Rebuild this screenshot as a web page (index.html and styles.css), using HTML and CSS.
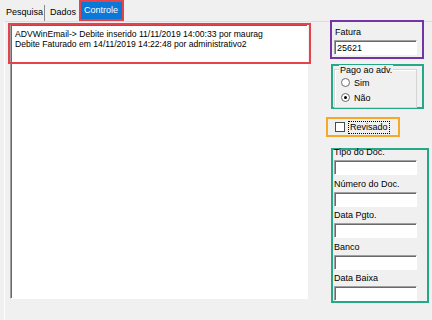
FILE: index.html
```html
<!DOCTYPE html>
<html lang="pt">
<head>
    <meta charset="UTF-8">
    <title>Controle</title>
    <link rel="stylesheet" href="styles.css">
</head>
<body>
    <div class="tabs">
        <div class="tab sep">Pesquisa</div>
        <div class="tab">Dados</div>
        <div class="tab active">Controle</div>
    </div>

    <div class="panel">
        <div class="memo">
            <div class="mark-red"></div>
            <div class="memo-text">
                ADVWinEmail-&gt; Debite inserido 11/11/2019 14:00:33 por maurag<br>
                Debite Faturado em 14/11/2019 14:22:48 por administrativo2
            </div>
        </div>

        <div class="side">
            <div class="box box-purple">
                <div class="label">Fatura</div>
                <div class="edit">25621</div>
            </div>

            <div class="box box-green pago">
                <div class="group">
                    <span class="group-title">Pago ao adv.</span>
                    <div class="radio-row"><span class="radio"></span>Sim</div>
                    <div class="radio-row"><span class="radio checked"></span>Não</div>
                </div>
            </div>

            <div class="box box-orange">
                <span class="check"></span>
                <span class="focus">Revisado</span>
            </div>

            <div class="box box-green docs">
                <div class="field">
                    <div class="label">Tipo do Doc.</div>
                    <div class="edit"></div>
                </div>
                <div class="field">
                    <div class="label">Número do Doc.</div>
                    <div class="edit"></div>
                </div>
                <div class="field">
                    <div class="label">Data Pgto.</div>
                    <div class="edit"></div>
                </div>
                <div class="field">
                    <div class="label">Banco</div>
                    <div class="edit"></div>
                </div>
                <div class="field">
                    <div class="label">Data Baixa</div>
                    <div class="edit"></div>
                </div>
            </div>
        </div>
    </div>
</body>
</html>
```

FILE: styles.css
```css
body {
    margin: 0;
    height: 320px;
    overflow: hidden;
    background: #f0f0f0;
    font-family: "Liberation Sans", Arial, sans-serif;
    font-size: 9px;
    color: #000;
}
.tabs {
    display: flex;
    align-items: flex-start;
    height: 21px;
    padding-left: 3px;
}
.tab {
    margin-top: 5px;
    padding: 2px 2px 3px 5px;
    line-height: 11px;
}
.tab.sep {
    padding-left: 3px;
    padding-right: 1px;
    border-right: 1px solid #8a8a8a;
}
.tab.active {
    margin-top: 2px;
    margin-left: 3px;
    padding: 3px 4px 3px 3px;
    background: #0a78d7;
    color: #fff;
    outline: 2px solid #e5434b;
}
.panel {
    display: flex;
    align-items: flex-start;
    margin-left: 4px;
    height: 299px;
    border-top: 1px solid #dcdcdc;
    border-left: 1px solid #fdfdfd;
}
.memo {
    position: relative;
    margin: 2px 0 0 5px;
    width: 296px;
    height: 273px;
    background: #fff;
    border: 1px solid;
    border-color: #a0a0a0 #fff #fff #a0a0a0;
    box-shadow: inset 1px 1px #696969;
}
.mark-red {
    position: absolute;
    left: -3px;
    top: -2px;
    width: 299px;
    height: 37px;
    border: 2px solid #e5434b;
}
.memo-text {
    padding: 4px 0 0 4px;
    font-size: 8.6px;
    line-height: 10px;
    white-space: nowrap;
}
.side {
    display: flex;
    flex-direction: column;
    align-items: flex-start;
    margin-left: 18px;
    width: 102px;
}
.box {
    border: 2px solid;
}
.box-purple {
    border-color: #7434a6;
    margin: -2px 0 0 4px;
    width: 90px;
    padding: 5px 0 2px 0;
}
.box-purple .edit {
    margin-left: 2px;
}
.box-green {
    border-color: #25a887;
}
.pago {
    margin: 5px 0 0 5px;
    width: 89px;
    height: 41px;
}
.group {
    margin: 3px 0 0 1px;
    width: 81px;
    padding-bottom: 2px;
    border: 1px solid #d5d5d5;
    box-shadow: inset 1px 1px #fff;
}
.group-title {
    display: block;
    width: fit-content;
    margin: -5px 0 -1px 4px;
    padding: 0 1px;
    line-height: 11px;
    background: #f0f0f0;
}
.radio-row {
    display: flex;
    align-items: center;
    height: 15px;
    padding-left: 6px;
}
.radio {
    display: flex;
    align-items: center;
    justify-content: center;
    width: 7px;
    height: 7px;
    margin-right: 4px;
    border: 1px solid #6a6a6a;
    border-radius: 50%;
    background: #fff;
}
.radio.checked::after {
    content: "";
    width: 3px;
    height: 3px;
    border-radius: 50%;
    background: #000;
}
.box-orange {
    display: flex;
    align-items: center;
    border-color: #f4a928;
    margin-top: 8px;
    width: 70px;
    height: 16px;
}
.check {
    width: 8px;
    height: 8px;
    margin: 0 3px 0 7px;
    border: 1px solid #4a4a4a;
    background: #fff;
}
.focus {
    padding: 0 1px;
    line-height: 11px;
    border: 1px dotted #000;
}
.docs {
    margin: 11px 0 0 5px;
    width: 93px;
    padding-left: 1px;
}
.field + .field {
    margin-top: 3.5px;
}
.field:first-child {
    margin-top: -3px;
}
.label {
    line-height: 11px;
    white-space: nowrap;
}
.box-purple .label {
    padding-left: 3px;
}
.edit {
    box-sizing: border-box;
    width: 83px;
    height: 15px;
    margin-top: 2px;
    padding: 2px 0 0 2px;
    line-height: 11px;
    background: #fff;
    border: 1px solid;
    border-color: #a0a0a0 #fff #fff #a0a0a0;
    box-shadow: inset 1px 1px #696969;
}
```
